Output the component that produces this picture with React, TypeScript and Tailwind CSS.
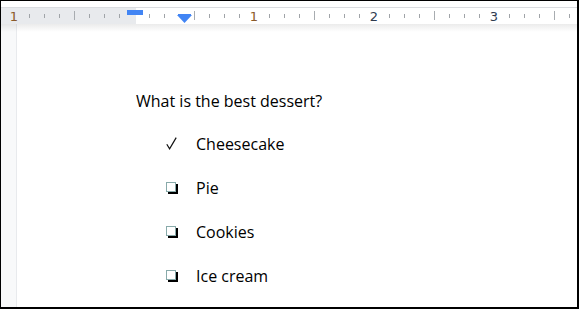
import React from "react";

const minor = [29, 44, 59, 89, 104, 119, 149, 164, 209, 224, 239, 269, 284, 299, 329, 344, 359, 389, 404, 419, 449, 464, 479, 509, 524, 539, 569];
const major = [74, 194, 314, 434, 554];
const nums = [
  { x: 14, t: "1", c: "text-[#8a5a2a]" },
  { x: 254, t: "1", c: "text-[#8a5a2a]" },
  { x: 374, t: "2", c: "text-[#2f3b4e]" },
  { x: 494, t: "3", c: "text-[#2f3b4e]" },
];

function Box() {
  return (
    <span className="inline-block w-[10px] h-[10px] border border-[#8aa] bg-white shadow-[2px_2px_0_#000] -mt-[3px]" />
  );
}

function Check() {
  return (
    <svg width="11" height="13" viewBox="0 0 11 13" className="-mt-[2px]">
      <path d="M0.8 7.2 L3.6 11.8 L10.2 0.6" fill="none" stroke="#111" strokeWidth="1.2" />
    </svg>
  );
}

export default function App() {
  const items = [
    { mark: "check", label: "Cheesecake" },
    { mark: "box", label: "Pie" },
    { mark: "box", label: "Cookies" },
    { mark: "box", label: "Ice cream" },
  ];
  return (
    <div className="w-[579px] h-[309px] border-l border-t border-r-2 border-b-2 border-black bg-white flex flex-col overflow-hidden font-['Open_Sans',sans-serif]">
      <div className="h-[6px] bg-white border-b border-[#dadce0] box-content" />
      <div className="relative h-[16px] flex">
        <div className="w-[135px] bg-[#e8eaed]" />
        <div className="flex-1 bg-white" />
        <svg className="absolute left-0 top-0" width="576" height="16">
          {minor.map((x) => (
            <rect key={x} x={x - 1} y={6} width={1} height={4} fill="#a0a4a8" />
          ))}
          {major.map((x) => (
            <rect key={x} x={x - 1} y={3} width={1} height={9} fill="#a8acb0" />
          ))}
          <rect x={126} y={2} width={16} height={5} fill="#4285f4" />
          <polygon points="176,7 191,7 183.5,15" fill="#4285f4" />
          <rect x={177} y={6} width={13} height={2} fill="#4285f4" />
        </svg>
        {nums.map((n) => (
          <span
            key={n.x}
            className={`absolute top-[1px] text-[13px] leading-[15px] font-['DejaVu_Sans',sans-serif] -translate-x-1/2 ${n.c}`}
            style={{ left: n.x - 1 }}
          >
            {n.t}
          </span>
        ))}
      </div>
      <div className="flex-1 flex relative">
        <div className="w-[15px] bg-[#f8f9fa] border-r border-[#e8eaed] box-content" />
        <div className="flex-1 bg-white pl-[119px] pt-[67px] text-[16px] leading-[20px] text-black">
          <div>What is the best dessert?</div>
          <div className="mt-[11px]">
            {items.map((it) => (
              <div key={it.label} className="h-[44px] flex items-center">
                <div className="w-[30px] pl-[30px] box-content flex items-center">
                  {it.mark === "check" ? <Check /> : <Box />}
                </div>
                <span>{it.label}</span>
              </div>
            ))}
          </div>
        </div>
        <div className="absolute left-0 right-0 top-0 h-[8px] bg-gradient-to-b from-[rgba(0,0,0,0.08)] to-transparent" />
      </div>
    </div>
  );
}
